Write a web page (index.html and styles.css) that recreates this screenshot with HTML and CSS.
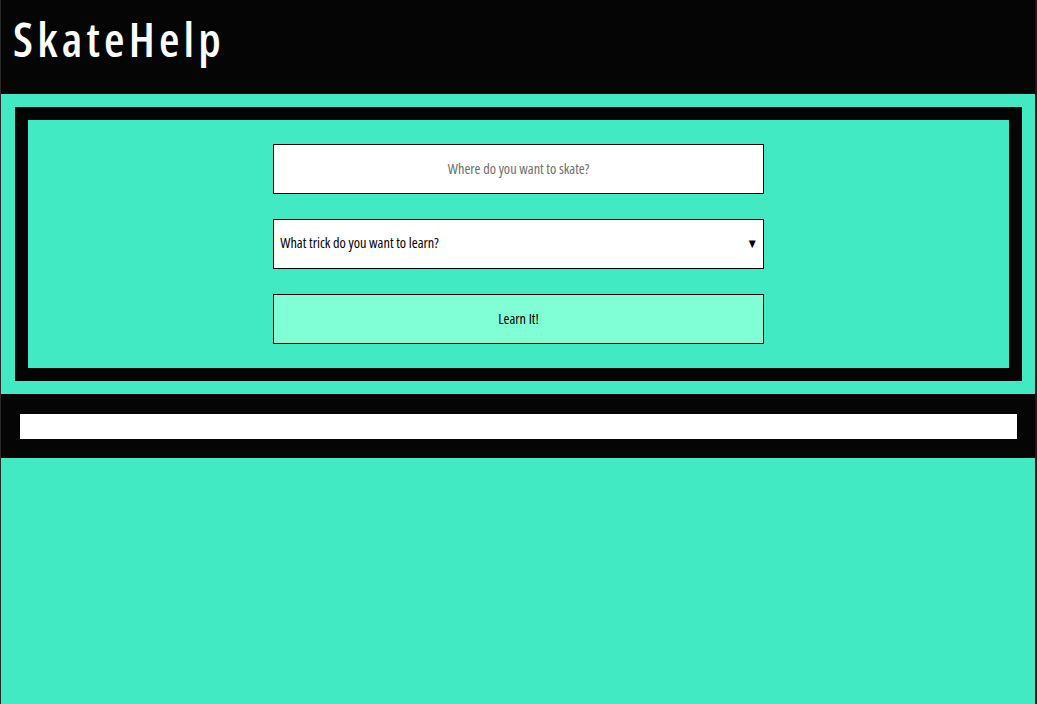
FILE: index.html
```html
<!DOCTYPE html>
<html lang="en">
<head>
<meta charset="utf-8">
<title>SkateHelp</title>
<link rel="stylesheet" href="styles.css">
</head>
<body>
<div class="page">
  <header class="site-header">
    <h1 class="logo">SkateHelp</h1>
  </header>
  <section class="search">
    <div class="frame">
      <form class="search-form">
        <input class="field field-input" type="text" placeholder="Where do you want to skate?">
        <div class="field field-select">
          <span class="select-label">What trick do you want to learn?</span>
          <span class="select-arrow">▼</span>
        </div>
        <button class="field field-button" type="button">Learn It!</button>
      </form>
    </div>
  </section>
  <section class="results">
    <div class="results-bar"></div>
  </section>
  <div class="rest"></div>
</div>
</body>
</html>
```

FILE: styles.css
```css
html, body {
  margin: 0;
  padding: 0;
  height: 100%;
}
body {
  background: #41eac2;
  font-family: "Open Sans", "Liberation Sans", sans-serif;
  font-stretch: 75%;
}
.page {
  min-height: 100%;
  display: flex;
  flex-direction: column;
  border-left: 1px solid #2a2a2a;
  border-right: 2px solid #1a1a1a;
  background: #41eac2;
}
.site-header {
  background: #050505;
  height: 94px;
  box-sizing: border-box;
  padding: 7px 0 0 12px;
}
.logo {
  margin: 0;
  color: #fff;
  font-family: "Open Sans", sans-serif;
  font-stretch: 75%;
  font-size: 47px;
  font-weight: 600;
  letter-spacing: 4.2px;
  line-height: normal;
}
.search {
  padding: 13px 13px 13px 14px;
}
.frame {
  border: 13px solid #050505;
  padding: 24px 0;
}
.search-form {
  display: flex;
  flex-direction: column;
  align-items: center;
  gap: 25px;
  margin: 0;
}
.field {
  width: 50%;
  height: 50px;
  box-sizing: border-box;
  border: 1px solid #000;
  font-family: "Open Sans", sans-serif;
  font-stretch: 75%;
  font-size: 14.3px;
  font-weight: 500;
  margin: 0;
  padding-bottom: 3px;
}
.field-input {
  background: #fff;
  text-align: center;
  outline: none;
}
.field-input::placeholder {
  color: #6e6e6e;
}
.field-select {
  background: #fff;
  display: flex;
  align-items: center;
  justify-content: space-between;
  padding: 0 7px 3px 6px;
  color: #000;
}
.select-arrow {
  font-family: "DejaVu Sans", sans-serif;
  font-size: 10px;
  padding-top: 2px;
}
.field-button {
  background: #80ffd6;
  color: #000;
  cursor: pointer;
}
.results {
  background: #050505;
  padding: 20px 18px 19px 19px;
}
.results-bar {
  background: #fff;
  height: 25px;
}
.rest {
  flex: 1;
}
```
